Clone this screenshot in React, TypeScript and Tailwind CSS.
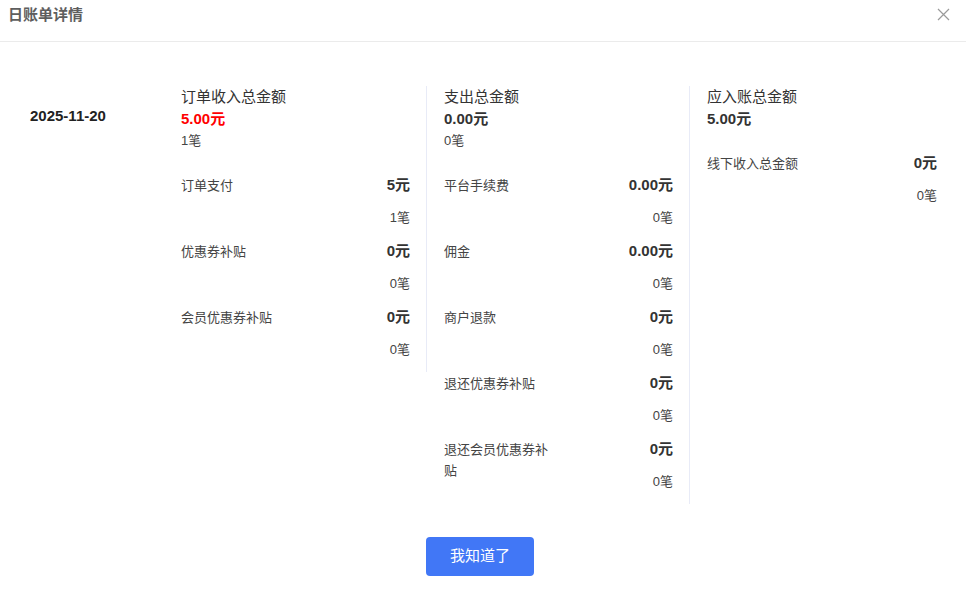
import React from "react";

type Item = { label: string; value: string; count: string };
type Col = { title: string; amount: string; red?: boolean; count?: string; items: Item[] };

const cols: Col[] = [
  {
    title: "订单收入总金额",
    amount: "5.00元",
    red: true,
    count: "1笔",
    items: [
      { label: "订单支付", value: "5元", count: "1笔" },
      { label: "优惠券补贴", value: "0元", count: "0笔" },
      { label: "会员优惠券补贴", value: "0元", count: "0笔" },
    ],
  },
  {
    title: "支出总金额",
    amount: "0.00元",
    count: "0笔",
    items: [
      { label: "平台手续费", value: "0.00元", count: "0笔" },
      { label: "佣金", value: "0.00元", count: "0笔" },
      { label: "商户退款", value: "0元", count: "0笔" },
      { label: "退还优惠券补贴", value: "0元", count: "0笔" },
      { label: "退还会员优惠券补贴", value: "0元", count: "0笔" },
    ],
  },
  {
    title: "应入账总金额",
    amount: "5.00元",
    items: [{ label: "线下收入总金额", value: "0元", count: "0笔" }],
  },
];

export default function App() {
  return (
    <div
      className="w-[966px] h-[596px] bg-white text-[#333] overflow-hidden"
      style={{ fontFamily: "Arial, 'Liberation Sans', 'Noto Sans CJK SC', sans-serif" }}
    >
      {/* Header */}
      <div className="h-[42px] border-b border-[#ebebeb] flex items-center justify-between pl-[8px] pr-[16px]">
        <div className="text-[15px] font-bold text-[#5e5e5e] -mt-[10px]">日账单详情</div>
        <svg width="13" height="13" viewBox="0 0 13 13" className="-mt-[12px]">
          <path d="M1 1L12 12M12 1L1 12" stroke="#9a9a9a" strokeWidth="1.2" />
        </svg>
      </div>

      {/* Body */}
      <div className="flex items-start pl-[30px] pt-[44px]">
        <div className="w-[134px] pt-[21px] text-[15px] font-bold leading-[18px] text-[#222]">2025-11-20</div>
        <div className="flex items-start">
          {cols.map((c, i) => (
            <div
              key={c.title}
              className={
                i < 2
                  ? "w-[263px] pl-[17px] pr-[16px] border-r border-[#e8ebf7]"
                  : "w-[263px] pl-[17px] pr-[16px]"
              }
            >
              <div className="text-[15px] leading-[22px]">{c.title}</div>
              <div className={c.red ? "text-[15px] font-bold leading-[22px] text-[#ff0000]" : "text-[15px] font-bold leading-[22px]"}>
                {c.amount}
              </div>
              {c.count && <div className="text-[13px] leading-[22px] text-[#444]">{c.count}</div>}
              <div className="mt-[22px]">
                {c.items.map((it) => (
                  <div key={it.label} className="flex justify-between items-start mb-[11px]">
                    <div className="w-[112px] pt-[1px] text-[13px] leading-[21px] text-[#444]">{it.label}</div>
                    <div className="flex flex-col items-end">
                      <div className="text-[15px] font-bold leading-[22px]">{it.value}</div>
                      <div className="mt-[11px] text-[13px] leading-[22px] text-[#444]">{it.count}</div>
                    </div>
                  </div>
                ))}
              </div>
            </div>
          ))}
        </div>
      </div>

      {/* Footer */}
      <div className="flex justify-center mt-[33px] pr-[6px]">
        <button className="w-[108px] h-[39px] rounded-[4px] bg-[#4177f6] text-white text-[15px]">我知道了</button>
      </div>
    </div>
  );
}
